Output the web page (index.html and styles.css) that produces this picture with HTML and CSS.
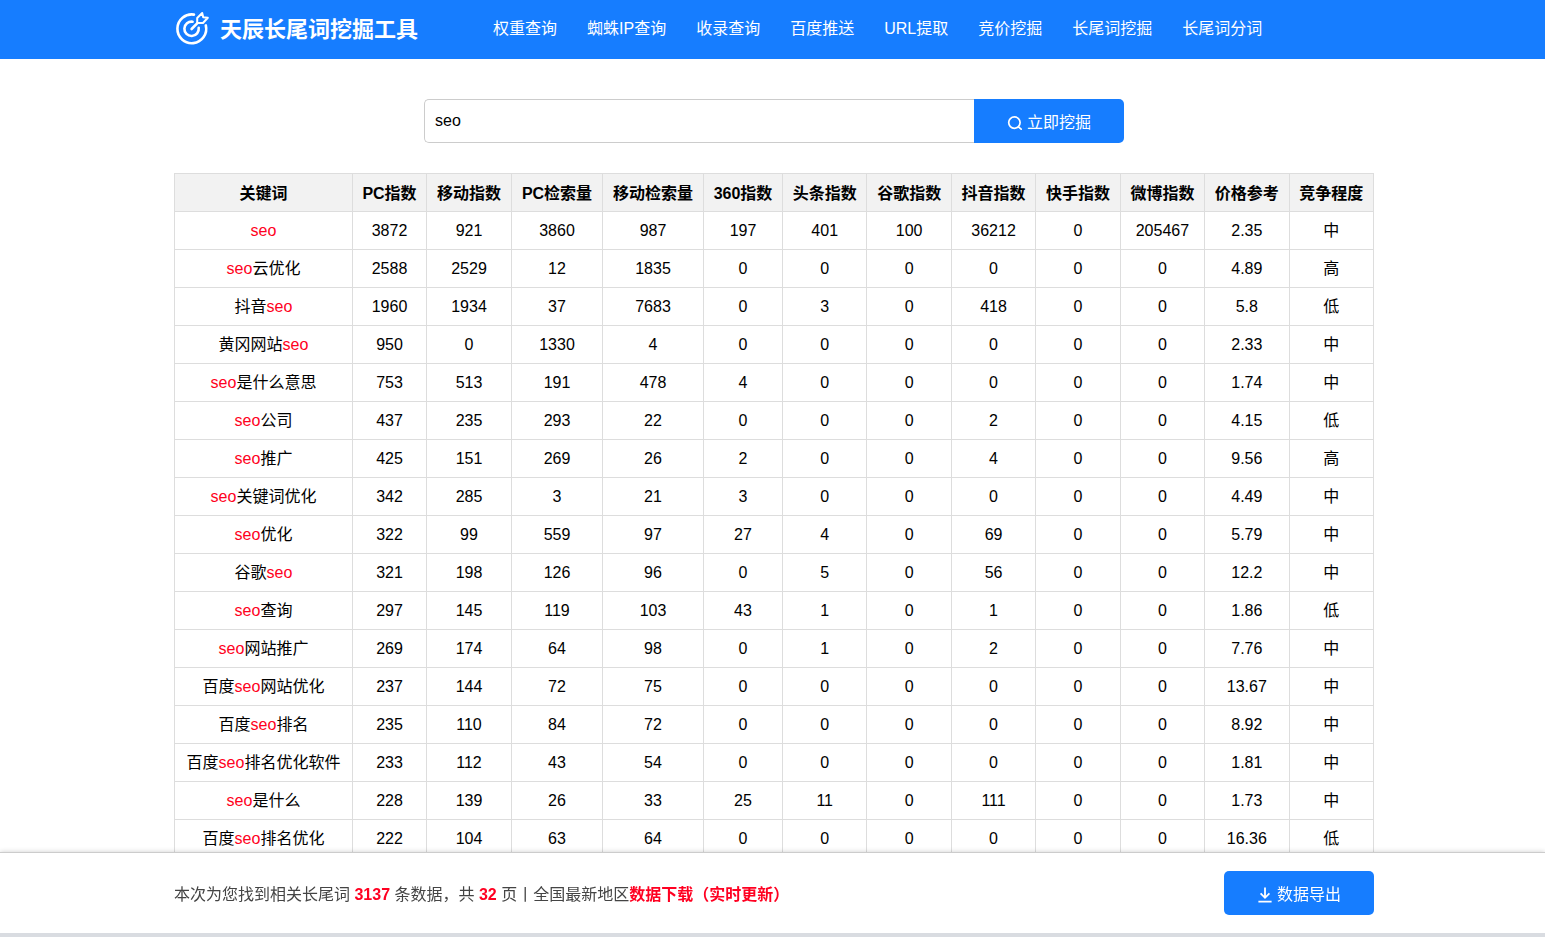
FILE: index.html
```html
<!DOCTYPE html>
<html lang="zh-CN">
<head>
<meta charset="utf-8">
<meta name="viewport" content="width=device-width, initial-scale=1">
<title>天辰长尾词挖掘工具</title>
<link rel="stylesheet" href="styles.css">
</head>
<body>
<header class="site-header">
  <div class="container header-inner">
    <a class="brand" href="#">
      <svg class="brand-icon" viewBox="0 0 36 36" fill="none" stroke="#fff" stroke-width="2.6" stroke-linecap="round" stroke-linejoin="round" aria-hidden="true">
        <path d="M20 3.6A14.4 14.4 0 1 0 31.8 14.4"/>
        <path d="M18.6 10.7A7.2 7.2 0 1 0 24.7 16.8"/>
        <path d="M17.6 18 23.4 12.2"/>
        <path d="M23.2 12V7L28.2 2L29.2 6.2L33.8 6.8L29 12Z" stroke-width="2"/>
      </svg>
      <span>天辰长尾词挖掘工具</span>
    </a>
    <nav class="nav">
      <a href="#">权重查询</a>
      <a href="#">蜘蛛IP查询</a>
      <a href="#">收录查询</a>
      <a href="#">百度推送</a>
      <a href="#">URL提取</a>
      <a href="#">竞价挖掘</a>
      <a href="#">长尾词挖掘</a>
      <a href="#">长尾词分词</a>
    </nav>
  </div>
</header>
<main class="main">
  <div class="container">
    <form class="search">
      <input class="search-input" type="text" value="seo" aria-label="关键词">
      <button class="button search-button" type="button">
        <svg class="button-icon" viewBox="0 0 16 16" fill="none" stroke="#fff" stroke-width="1.7" stroke-linecap="round" aria-hidden="true"><circle cx="7.4" cy="7.6" r="5.7"/><path d="M11.4 11.8 14.2 14.2"/></svg>
        <span>立即挖掘</span>
      </button>
    </form>
    <table class="results">
      <colgroup><col class="col-word"><col class="col-pc"><col class="col-mobile"><col class="col-pc-search"><col class="col-mobile-search"><col class="col-360"><col span="7"></colgroup>
      <thead>
        <tr><th>关键词</th><th>PC指数</th><th>移动指数</th><th>PC检索量</th><th>移动检索量</th><th>360指数</th><th>头条指数</th><th>谷歌指数</th><th>抖音指数</th><th>快手指数</th><th>微博指数</th><th>价格参考</th><th>竞争程度</th></tr>
      </thead>
      <tbody>
        <tr><td><em>seo</em></td><td>3872</td><td>921</td><td>3860</td><td>987</td><td>197</td><td>401</td><td>100</td><td>36212</td><td>0</td><td>205467</td><td>2.35</td><td>中</td></tr>
        <tr><td><em>seo</em>云优化</td><td>2588</td><td>2529</td><td>12</td><td>1835</td><td>0</td><td>0</td><td>0</td><td>0</td><td>0</td><td>0</td><td>4.89</td><td>高</td></tr>
        <tr><td>抖音<em>seo</em></td><td>1960</td><td>1934</td><td>37</td><td>7683</td><td>0</td><td>3</td><td>0</td><td>418</td><td>0</td><td>0</td><td>5.8</td><td>低</td></tr>
        <tr><td>黄冈网站<em>seo</em></td><td>950</td><td>0</td><td>1330</td><td>4</td><td>0</td><td>0</td><td>0</td><td>0</td><td>0</td><td>0</td><td>2.33</td><td>中</td></tr>
        <tr><td><em>seo</em>是什么意思</td><td>753</td><td>513</td><td>191</td><td>478</td><td>4</td><td>0</td><td>0</td><td>0</td><td>0</td><td>0</td><td>1.74</td><td>中</td></tr>
        <tr><td><em>seo</em>公司</td><td>437</td><td>235</td><td>293</td><td>22</td><td>0</td><td>0</td><td>0</td><td>2</td><td>0</td><td>0</td><td>4.15</td><td>低</td></tr>
        <tr><td><em>seo</em>推广</td><td>425</td><td>151</td><td>269</td><td>26</td><td>2</td><td>0</td><td>0</td><td>4</td><td>0</td><td>0</td><td>9.56</td><td>高</td></tr>
        <tr><td><em>seo</em>关键词优化</td><td>342</td><td>285</td><td>3</td><td>21</td><td>3</td><td>0</td><td>0</td><td>0</td><td>0</td><td>0</td><td>4.49</td><td>中</td></tr>
        <tr><td><em>seo</em>优化</td><td>322</td><td>99</td><td>559</td><td>97</td><td>27</td><td>4</td><td>0</td><td>69</td><td>0</td><td>0</td><td>5.79</td><td>中</td></tr>
        <tr><td>谷歌<em>seo</em></td><td>321</td><td>198</td><td>126</td><td>96</td><td>0</td><td>5</td><td>0</td><td>56</td><td>0</td><td>0</td><td>12.2</td><td>中</td></tr>
        <tr><td><em>seo</em>查询</td><td>297</td><td>145</td><td>119</td><td>103</td><td>43</td><td>1</td><td>0</td><td>1</td><td>0</td><td>0</td><td>1.86</td><td>低</td></tr>
        <tr><td><em>seo</em>网站推广</td><td>269</td><td>174</td><td>64</td><td>98</td><td>0</td><td>1</td><td>0</td><td>2</td><td>0</td><td>0</td><td>7.76</td><td>中</td></tr>
        <tr><td>百度<em>seo</em>网站优化</td><td>237</td><td>144</td><td>72</td><td>75</td><td>0</td><td>0</td><td>0</td><td>0</td><td>0</td><td>0</td><td>13.67</td><td>中</td></tr>
        <tr><td>百度<em>seo</em>排名</td><td>235</td><td>110</td><td>84</td><td>72</td><td>0</td><td>0</td><td>0</td><td>0</td><td>0</td><td>0</td><td>8.92</td><td>中</td></tr>
        <tr><td>百度<em>seo</em>排名优化软件</td><td>233</td><td>112</td><td>43</td><td>54</td><td>0</td><td>0</td><td>0</td><td>0</td><td>0</td><td>0</td><td>1.81</td><td>中</td></tr>
        <tr><td><em>seo</em>是什么</td><td>228</td><td>139</td><td>26</td><td>33</td><td>25</td><td>11</td><td>0</td><td>111</td><td>0</td><td>0</td><td>1.73</td><td>中</td></tr>
        <tr><td>百度<em>seo</em>排名优化</td><td>222</td><td>104</td><td>63</td><td>64</td><td>0</td><td>0</td><td>0</td><td>0</td><td>0</td><td>0</td><td>16.36</td><td>低</td></tr>
      </tbody>
    </table>
  </div>
</main>
<footer class="export-bar">
  <div class="container export-inner">
    <p class="summary">本次为您找到相关长尾词 <strong>3137</strong> 条数据，共 <strong>32</strong> 页丨全国最新地区<a href="#">数据下载（实时更新）</a></p>
    <button class="button export-button" type="button">
      <svg class="button-icon" viewBox="0 0 16 16" fill="none" stroke="#fff" stroke-width="1.8" aria-hidden="true"><path d="M8 0.6V10.6M3.6 6.4 8 10.8 12.4 6.4M1.4 14.6H14.6"/></svg>
      <span>数据导出</span>
    </button>
  </div>
</footer>
</body>
</html>
```
FILE: styles.css
```css
* {
  box-sizing: border-box;
}

body {
  margin: 0;
  background: #fff;
  color: #000;
  font-family: "Liberation Sans", "Noto Sans CJK SC", sans-serif;
  font-size: 16px;
  line-height: 24px;
}

.container {
  max-width: 1200px;
  margin: 0 auto;
}

.site-header,
.main,
.export-bar {
  padding-left: 3px;
}

.site-header {
  background: #167dff;
}

.header-inner {
  display: flex;
  align-items: center;
  gap: 75px;
  height: 58px;
  margin-bottom: 0;
}

.site-header {
  padding-bottom: 1px;
}

.brand {
  display: flex;
  align-items: center;
  gap: 10px;
  color: #fff;
  font-size: 22px;
  font-weight: 700;
  text-decoration: none;
  white-space: nowrap;
}

.brand span {
  padding-top: 2px;
}

.brand-icon {
  width: 36px;
  height: 36px;
}

.nav {
  display: flex;
  gap: 30px;
}

.nav a {
  color: #fff;
  text-decoration: none;
  white-space: nowrap;
}

.main {
  padding-top: 40px;
  padding-bottom: 72px;
}

.search {
  display: flex;
  max-width: 700px;
  margin: 0 auto 30px;
}

.search-input {
  flex: 1;
  min-width: 0;
  height: 44px;
  padding: 0 10px;
  border: 1px solid #ccc;
  border-right: 0;
  border-radius: 5px 0 0 5px;
  background: #fff;
  color: #000;
  font: inherit;
  outline: 0;
}

.button {
  display: flex;
  align-items: center;
  justify-content: center;
  gap: 4px;
  width: 150px;
  height: 44px;
  padding: 3px 0 0;
  border: 0;
  border-radius: 5px;
  background: #167dff;
  color: #fff;
  font: inherit;
  cursor: pointer;
}

.search-button {
  border-radius: 0 5px 5px 0;
}

.button-icon {
  width: 16px;
  height: 16px;
}

.results {
  width: 100%;
  table-layout: fixed;
  border-collapse: collapse;
  text-align: center;
}

.col-word { width: 178px; }
.col-pc { width: 74px; }
.col-mobile { width: 85px; }
.col-pc-search { width: 91px; }
.col-mobile-search { width: 101px; }
.col-360 { width: 79px; }

.results th,
.results td {
  height: 38px;
  padding: 0;
  border: 1px solid #ddd;
  white-space: nowrap;
}

.results th {
  padding-top: 2px;
  background: #f2f2f2;
}

.results em {
  color: #ff0021;
  font-style: normal;
}

.export-bar {
  position: fixed;
  right: 0;
  bottom: 0;
  left: 0;
  border-top: 1px solid #ccc;
  border-bottom: 4px solid #d9dce1;
  background: #fff;
  box-shadow: 0 0 5px rgba(0, 0, 0, 0.2);
}

.export-inner {
  display: flex;
  align-items: center;
  justify-content: space-between;
  height: 80px;
}

.summary {
  margin: 0;
  padding-top: 4px;
  color: #444;
}

.summary strong,
.summary a {
  color: #ff0021;
  font-weight: 700;
  text-decoration: none;
}
```
